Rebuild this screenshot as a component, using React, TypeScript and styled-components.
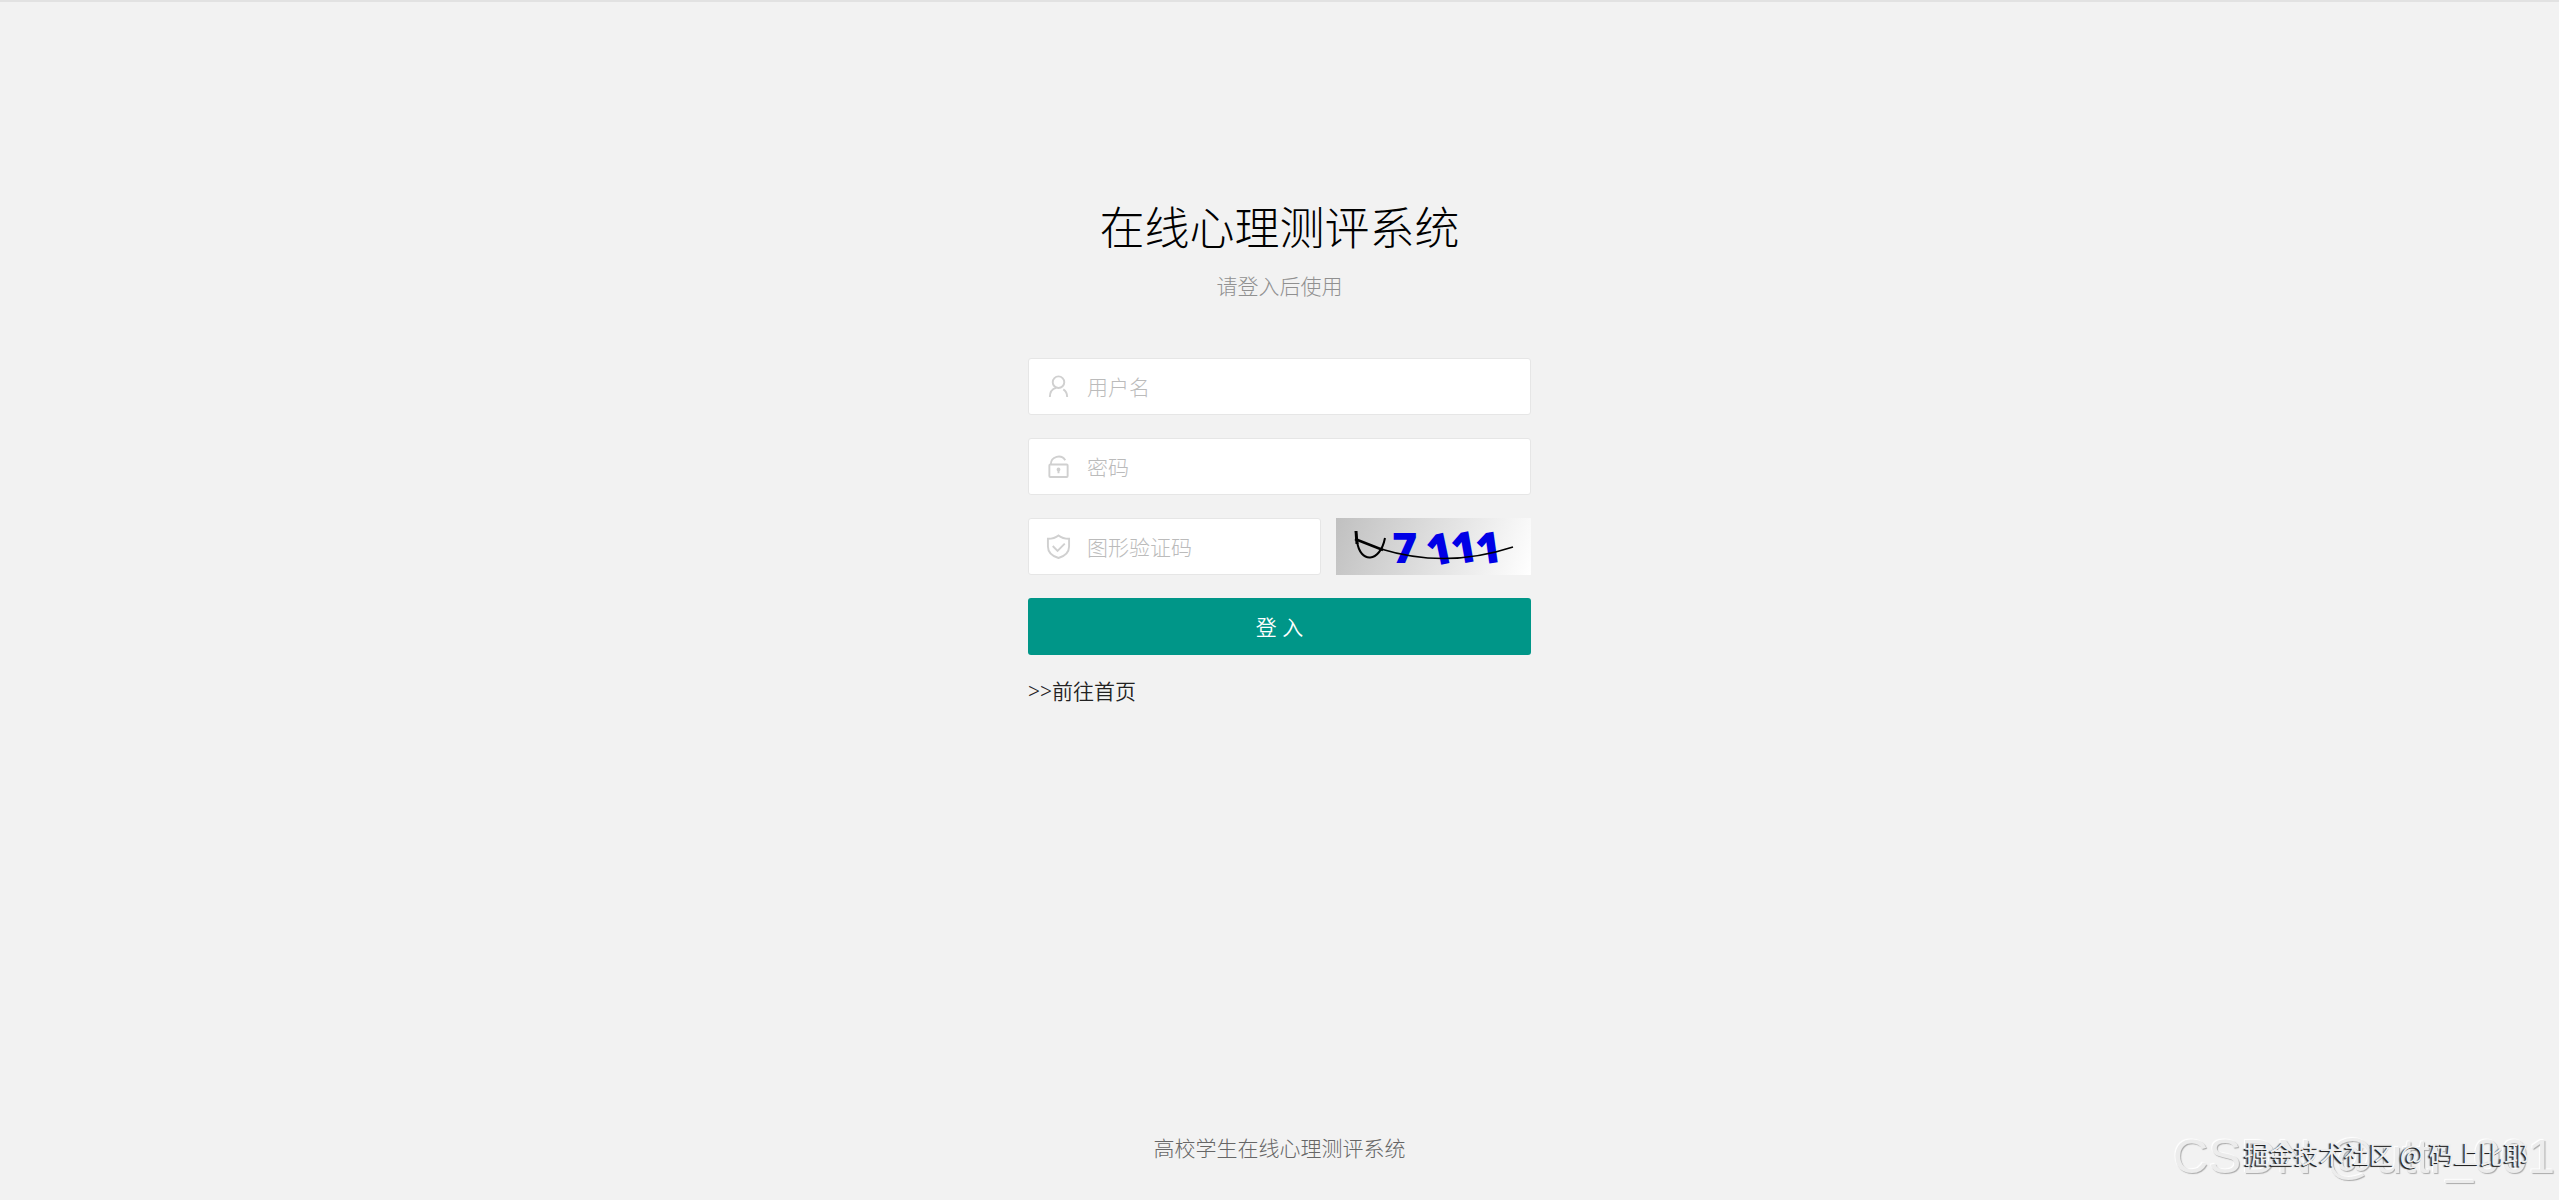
import React from "react";
import styled, { createGlobalStyle } from "styled-components";

const GlobalStyle = createGlobalStyle`
  *, *::before, *::after { box-sizing: border-box; }
  body {
    margin: 0;
    background: #f2f2f2;
    color: #333;
    font: 300 21px/32px "Noto Sans", "Noto Sans CJK SC", sans-serif;
  }
`;

const Page = styled.div`
  display: flex;
  flex-direction: column;
  align-items: center;
  min-height: 100vh;
  border-top: 2px solid #e2e2e2;
`;

const Main = styled.main`
  flex: 1;
  width: 100%;
  max-width: 563px;
  padding: 196px 30px 0;
`;

const Header = styled.header`
  text-align: center;
  padding-bottom: 56px;
`;

const Title = styled.h1`
  margin: 0 0 12px;
  color: #000;
  font-size: 45px;
  line-height: 60px;
  font-weight: 300;
`;

const Subtitle = styled.p`
  margin: 0;
  color: #909090;
`;

const Form = styled.form`
  display: flex;
  flex-direction: column;
  gap: 23px;
`;

const Row = styled.div`
  display: flex;
  gap: 15px;
`;

const Field = styled.label`
  display: flex;
  align-items: center;
  flex: 1;
  min-width: 0;
  height: 57px;
  padding-left: 17px;
  gap: 16px;
  background: #fff;
  border: 1px solid #e6e6e6;
  border-radius: 3px;
`;

const Icon = styled.svg`
  flex: none;
  width: 25px;
  height: 25px;
  fill: none;
  stroke: #d0d0d0;
  stroke-width: 2;
`;

const Input = styled.input`
  flex: 1;
  min-width: 0;
  padding: 0;
  border: 0;
  outline: 0;
  background: transparent;
  font: inherit;
  color: #333;
  &::placeholder { color: #bbb; opacity: 1; }
`;

const Captcha = styled.button`
  flex: none;
  width: 195px;
  height: 57px;
  padding: 0;
  border: 0;
  background: linear-gradient(110deg, #c0c0c0, #fff);
  cursor: pointer;
  svg { display: block; }
`;

const Digit = styled.text`
  fill: #0000e6;
  font: 800 43px "Open Sans", sans-serif;
`;

const Submit = styled.button`
  height: 57px;
  border: 0;
  border-radius: 3px;
  background: #009688;
  color: #fff;
  font: inherit;
  font-family: "Noto Sans", "Noto Sans CJK SC DemiLight", "Noto Sans CJK SC", sans-serif;
  font-weight: 350;
  cursor: pointer;
`;

const HomeLink = styled.a`
  align-self: flex-start;
  margin-top: -3px;
  color: #222;
  font-family: "Noto Sans", "Noto Sans CJK SC DemiLight", "Noto Sans CJK SC", sans-serif;
  font-weight: 350;
  text-decoration: none;
`;

const Footer = styled.footer`
  padding: 0 30px 36px;
  color: #666;
`;

const Watermark = styled.div`
  position: absolute;
  right: 4px;
  bottom: 14px;
  color: #ececec;
  font: 49px/60px "Liberation Sans", sans-serif;
  text-shadow: 1px 1px 1px #aaa, -1px -1px 1px #fff;
`;

const Credit = styled.div`
  position: absolute;
  right: 30px;
  bottom: 31px;
  color: #eee;
  font: 400 25px/32px "Noto Sans CJK SC", sans-serif;
  text-shadow: -1px 1px 0 #222, -2px 1px 1px #666;
`;

export default function App() {
  return (
    <>
      <GlobalStyle />
      <Page>
        <Main>
          <Header>
            <Title>在线心理测评系统</Title>
            <Subtitle>请登入后使用</Subtitle>
          </Header>
          <Form onSubmit={(e) => e.preventDefault()}>
            <Row>
              <Field>
                <Icon viewBox="0 0 26 26" aria-hidden="true">
                  <circle cx="13" cy="8.5" r="6" />
                  <path d="M4 24c0-5 3-8.500 6.500-9.500M18 16c2.500 1.500 4 4 4 8" />
                </Icon>
                <Input type="text" placeholder="用户名" aria-label="用户名" />
              </Field>
            </Row>
            <Row>
              <Field>
                <Icon viewBox="0 0 26 26" aria-hidden="true">
                  <rect x="3.500" y="11" width="19" height="13" rx="1" />
                  <path d="M5 11c0-9 11-11 15-4.500M13 16v4" />
                  <circle cx="13" cy="16" r="1" />
                </Icon>
                <Input type="password" placeholder="密码" aria-label="密码" />
              </Field>
            </Row>
            <Row>
              <Field>
                <Icon viewBox="0 0 26 26" aria-hidden="true">
                  <path d="M13 1.500c3 2.500 7 3.500 11 3.500V13c0 6-4.500 10-11 12C6.500 23 2 19 2 13V5C6 5 10 4 13 1.500zM7 12.500l5 5 7.500-7.500" />
                </Icon>
                <Input type="text" placeholder="图形验证码" aria-label="图形验证码" />
              </Field>
              <Captcha type="button" aria-label="7111">
                <svg width="195" height="57" viewBox="0 0 195 57" fill="none">
                  <Digit x="56" y="45">7</Digit>
                  <Digit transform="translate(94 49) rotate(-12)">1</Digit>
                  <Digit transform="translate(118 47) rotate(-10)">1</Digit>
                  <Digit transform="translate(142 47) rotate(-8)">1</Digit>
                  <path d="M20 13l1 13" stroke="#000" strokeWidth="3" />
                  <path d="M21 23c3 23 23 22 28-3" stroke="#000" strokeWidth="2" />
                  <path d="M19 21l28 11" stroke="#000" strokeWidth="2.500" />
                  <path d="M45 31q65 20 132-2" stroke="#000" strokeWidth="1.500" />
                </svg>
              </Captcha>
            </Row>
            <Submit type="submit">登 入</Submit>
            <HomeLink href="#">&gt;&gt;前往首页</HomeLink>
          </Form>
        </Main>
        <Footer>高校学生在线心理测评系统</Footer>
      </Page>
      <Watermark>CSDN @uttr_001</Watermark>
      <Credit>掘金技术社区 @ 码上比耶</Credit>
    </>
  );
}
